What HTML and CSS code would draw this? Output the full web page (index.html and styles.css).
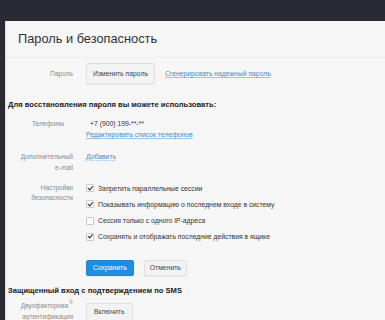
FILE: index.html
```html
<!DOCTYPE html>
<html lang="ru">
<head>
<meta charset="utf-8">
<link rel="stylesheet" href="styles.css">
</head>
<body>
<div class="topbar"></div>
<div class="panel">
  <div class="title">Пароль и безопасность</div>
  <div class="row row-pass">
    <div class="label">Пароль</div>
    <div class="field inline">
      <span class="btn">Изменить пароль</span>
      <a class="link">Сгенерировать надежный пароль</a>
    </div>
  </div>
  <div class="heading">Для восстановления пароля вы можете использовать:</div>
  <div class="row row-phones">
    <div class="label label-phones">Телефоны</div>
    <div class="field">
      <div class="phone">+7 (900) 199-**-**</div>
      <a class="link">Редактировать список телефонов</a>
    </div>
  </div>
  <div class="row row-email">
    <div class="label">Дополнительный<br>e-mail</div>
    <div class="field"><a class="link dotted">Добавить</a></div>
  </div>
  <div class="row row-sec">
    <div class="label">Настройки<br>безопасности</div>
    <div class="field checks">
      <label class="check"><span class="box on"></span>Запретить параллельные сессии</label>
      <label class="check"><span class="box on"></span>Показывать информацию о последнем входе в систему</label>
      <label class="check"><span class="box"></span>Сессия только с одного IP-адреса</label>
      <label class="check"><span class="box on"></span>Сохранять и отображать последние действия в ящике</label>
    </div>
  </div>
  <div class="row row-actions">
    <div class="label"></div>
    <div class="field inline">
      <span class="btn primary">Сохранить</span>
      <span class="btn">Отменить</span>
    </div>
  </div>
  <div class="heading h2">Защищенный вход с подтверждением по SMS</div>
  <div class="row row-2fa">
    <div class="label">Двухфакторная<sup class="q">®</sup><br>аутентификация</div>
    <div class="field"><span class="btn">Включить</span></div>
  </div>
</div>
</body>
</html>
```
FILE: styles.css
```css
html, body {
  margin: 0;
  padding: 0;
}
body {
  background: #2a2a35;
  font-family: "Liberation Sans", Arial, sans-serif;
  font-size: 6.8px;
  color: #333;
  height: 320px;
  overflow: hidden;
}
.topbar {
  height: 21px;
}
.panel {
  margin-left: 5px;
  background: #f6f6f6;
  height: 299px;
  border-left: 1px solid #dcdcdc;
  box-sizing: border-box;
}
.title {
  font-size: 12.8px;
  line-height: 16px;
  color: #333;
  padding: 10px 0 10px 12px;
  border-bottom: 1px solid #eeeeee;
}
.row {
  display: grid;
  grid-template-columns: 67px 1fr;
  column-gap: 13px;
}
.label {
  text-align: right;
  color: #8a8a8a;
  font-size: 6.6px;
  line-height: 10px;
}
.label-phones {
  padding-right: 9px;
}
.field {
  color: #333;
}
.inline {
  display: flex;
  align-items: center;
  gap: 10px;
}
.btn {
  display: inline-block;
  box-sizing: border-box;
  height: 17px;
  line-height: 15px;
  padding: 0 6px;
  background: #f3f3f3;
  border: 1px solid #e0e0e0;
  border-radius: 2px;
  color: #444;
  box-shadow: 0 1px 1px rgba(0,0,0,0.05);
}
.btn.primary {
  background: #1e8ee3;
  border-color: #1a86d8;
  color: #fff;
}
.link {
  color: #3f8fcb;
  text-decoration: underline;
  text-decoration-color: #9fc4e2;
}
.link.dotted {
  text-decoration-style: dotted;
}
.row-pass {
  margin-top: 5px;
  align-items: center;
}
.row-pass .btn {
  height: 21px;
  line-height: 19px;
  padding: 0 6px;
}
.heading {
  font-weight: bold;
  color: #222;
  padding-left: 2px;
  margin-top: 16px;
  font-size: 7.6px;
  line-height: 10px;
}
.row-phones {
  margin-top: 8px;
  line-height: 11px;
}
.row-phones .label { line-height: 11px; }
.phone { padding-left: 4px; }
.row-email {
  margin-top: 11px;
}
.row-email .label { line-height: 11px; }
.row-email .field { line-height: 11px; }
.row-sec {
  margin-top: 10px;
}
.checks {
  display: flex;
  flex-direction: column;
  gap: 6.3px;
}
.check {
  display: flex;
  align-items: center;
  height: 10px;
  gap: 4px;
}
.box {
  width: 6px;
  height: 6px;
  border: 1px solid #c9c9c9;
  background: #fff;
  border-radius: 1px;
  position: relative;
  flex: none;
}
.box.on::after {
  content: "";
  position: absolute;
  left: 1.5px;
  top: -0.5px;
  width: 1.5px;
  height: 3.5px;
  border: solid #222;
  border-width: 0 1.5px 1.5px 0;
  transform: rotate(40deg);
}
.row-actions {
  margin-top: 18px;
}
.row-actions .btn {
  height: 16px;
  line-height: 14px;
  padding: 0 5px;
}
.row-actions .btn.primary {
  padding: 0 6px;
}
.h2 {
  margin-top: 10px;
}
.row-2fa {
  margin-top: 7px;
  align-items: start;
}
.row-2fa .label {
  margin-top: -3px;
  line-height: 11px;
}
.row-2fa .btn {
  height: 18px;
  line-height: 16px;
  padding: 0 7px;
}
.q {
  font-size: 5px;
  vertical-align: top;
  line-height: 5px;
  margin-left: 1px;
}
```
